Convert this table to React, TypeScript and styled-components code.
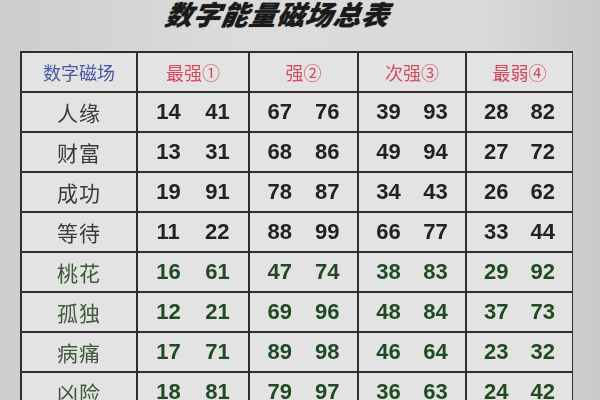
import React from 'react';
import styled, { createGlobalStyle } from 'styled-components';

const GlobalStyle = createGlobalStyle`
    html, body {
        margin: 0;
        padding: 0;
        width: 600px;
        height: 400px;
        overflow: hidden;
        background: #d6d6d6;
    }
`

type Row = {
    name: string
    pairs: [string, string][]
    green?: boolean
}

const rows: Row[] = [
    { name: '人缘', pairs: [['14', '41'], ['67', '76'], ['39', '93'], ['28', '82']] },
    { name: '财富', pairs: [['13', '31'], ['68', '86'], ['49', '94'], ['27', '72']] },
    { name: '成功', pairs: [['19', '91'], ['78', '87'], ['34', '43'], ['26', '62']] },
    { name: '等待', pairs: [['11', '22'], ['88', '99'], ['66', '77'], ['33', '44']] },
    { name: '桃花', pairs: [['16', '61'], ['47', '74'], ['38', '83'], ['29', '92']], green: true },
    { name: '孤独', pairs: [['12', '21'], ['69', '96'], ['48', '84'], ['37', '73']], green: true },
    { name: '病痛', pairs: [['17', '71'], ['89', '98'], ['46', '64'], ['23', '32']], green: true },
    { name: '凶险', pairs: [['18', '81'], ['79', '97'], ['36', '63'], ['24', '42']], green: true },
]

const headers = ['最强①', '强②', '次强③', '最弱④']

export default function App() {
    return (
        <>
            <GlobalStyle />
            <Page>
                <Title>数字能量磁场总表</Title>
                <Table>
                    <HeadCell $blue>数字磁场</HeadCell>
                    {headers.map(h => <HeadCell key={h}>{h}</HeadCell>)}
                    {rows.map(r => (
                        <React.Fragment key={r.name}>
                            <NameCell $green={r.green}>{r.name}</NameCell>
                            {r.pairs.map(([a, b]) => (
                                <NumCell key={a} $green={r.green}>
                                    <span>{a}</span>
                                    <span>{b}</span>
                                </NumCell>
                            ))}
                        </React.Fragment>
                    ))}
                </Table>
            </Page>
        </>
    )
}

const Page = styled.div`
    width: 600px;
    height: 400px;
    background: linear-gradient(90deg, #cdcdcd 0%, #dcdcdc 40%, #dadada 80%, #c9c9c9 100%);
    display: flex;
    flex-direction: column;
    align-items: flex-start;
    overflow: hidden;
`
const Title = styled.div`
    margin: -5px 0 0 166px;
    height: 40px;
    font-family: "Noto Sans CJK SC", sans-serif;
    font-size: 27px;
    font-weight: 900;
    font-style: italic;
    color: #1a1a1a;
    letter-spacing: 1px;
    line-height: 38px;
    transform: skewX(-10deg);
    text-shadow: 0 0 1px #444;
`
const Table = styled.div`
    margin: 18px 0 0 20px;
    width: 553px;
    display: grid;
    grid-template-columns: 114px 110px 107px 106px 105px;
    grid-auto-rows: 38px;
    border: 2px solid #2e2e2e;
    border-right-width: 3px;
    background: #2e2e2e;
    gap: 2px;
    box-sizing: border-box;
`
const Cell = styled.div`
    background: #e3e3e3;
    display: flex;
    align-items: center;
    justify-content: center;
`
const HeadCell = styled(Cell)<{ $blue?: boolean }>`
    font-family: "Noto Sans CJK SC", serif;
    font-size: 18px;
    color: ${p => p.$blue ? '#4756a6' : '#d44a5c'};
    filter: blur(0.3px);
`
const NameCell = styled(Cell)<{ $green?: boolean }>`
    font-family: "Noto Sans CJK SC", serif;
    font-size: 21px;
    letter-spacing: 1px;
    color: ${p => p.$green ? '#3e5a3a' : '#3a3a3a'};
    filter: blur(0.3px);
`
const NumCell = styled(Cell)<{ $green?: boolean }>`
    justify-content: space-around;
    padding: 0 6px;
    font-family: "Liberation Sans", Arial, sans-serif;
    font-size: 22px;
    font-weight: 700;
    color: ${p => p.$green ? '#1f4a22' : '#222222'};
    filter: blur(0.3px);
`
